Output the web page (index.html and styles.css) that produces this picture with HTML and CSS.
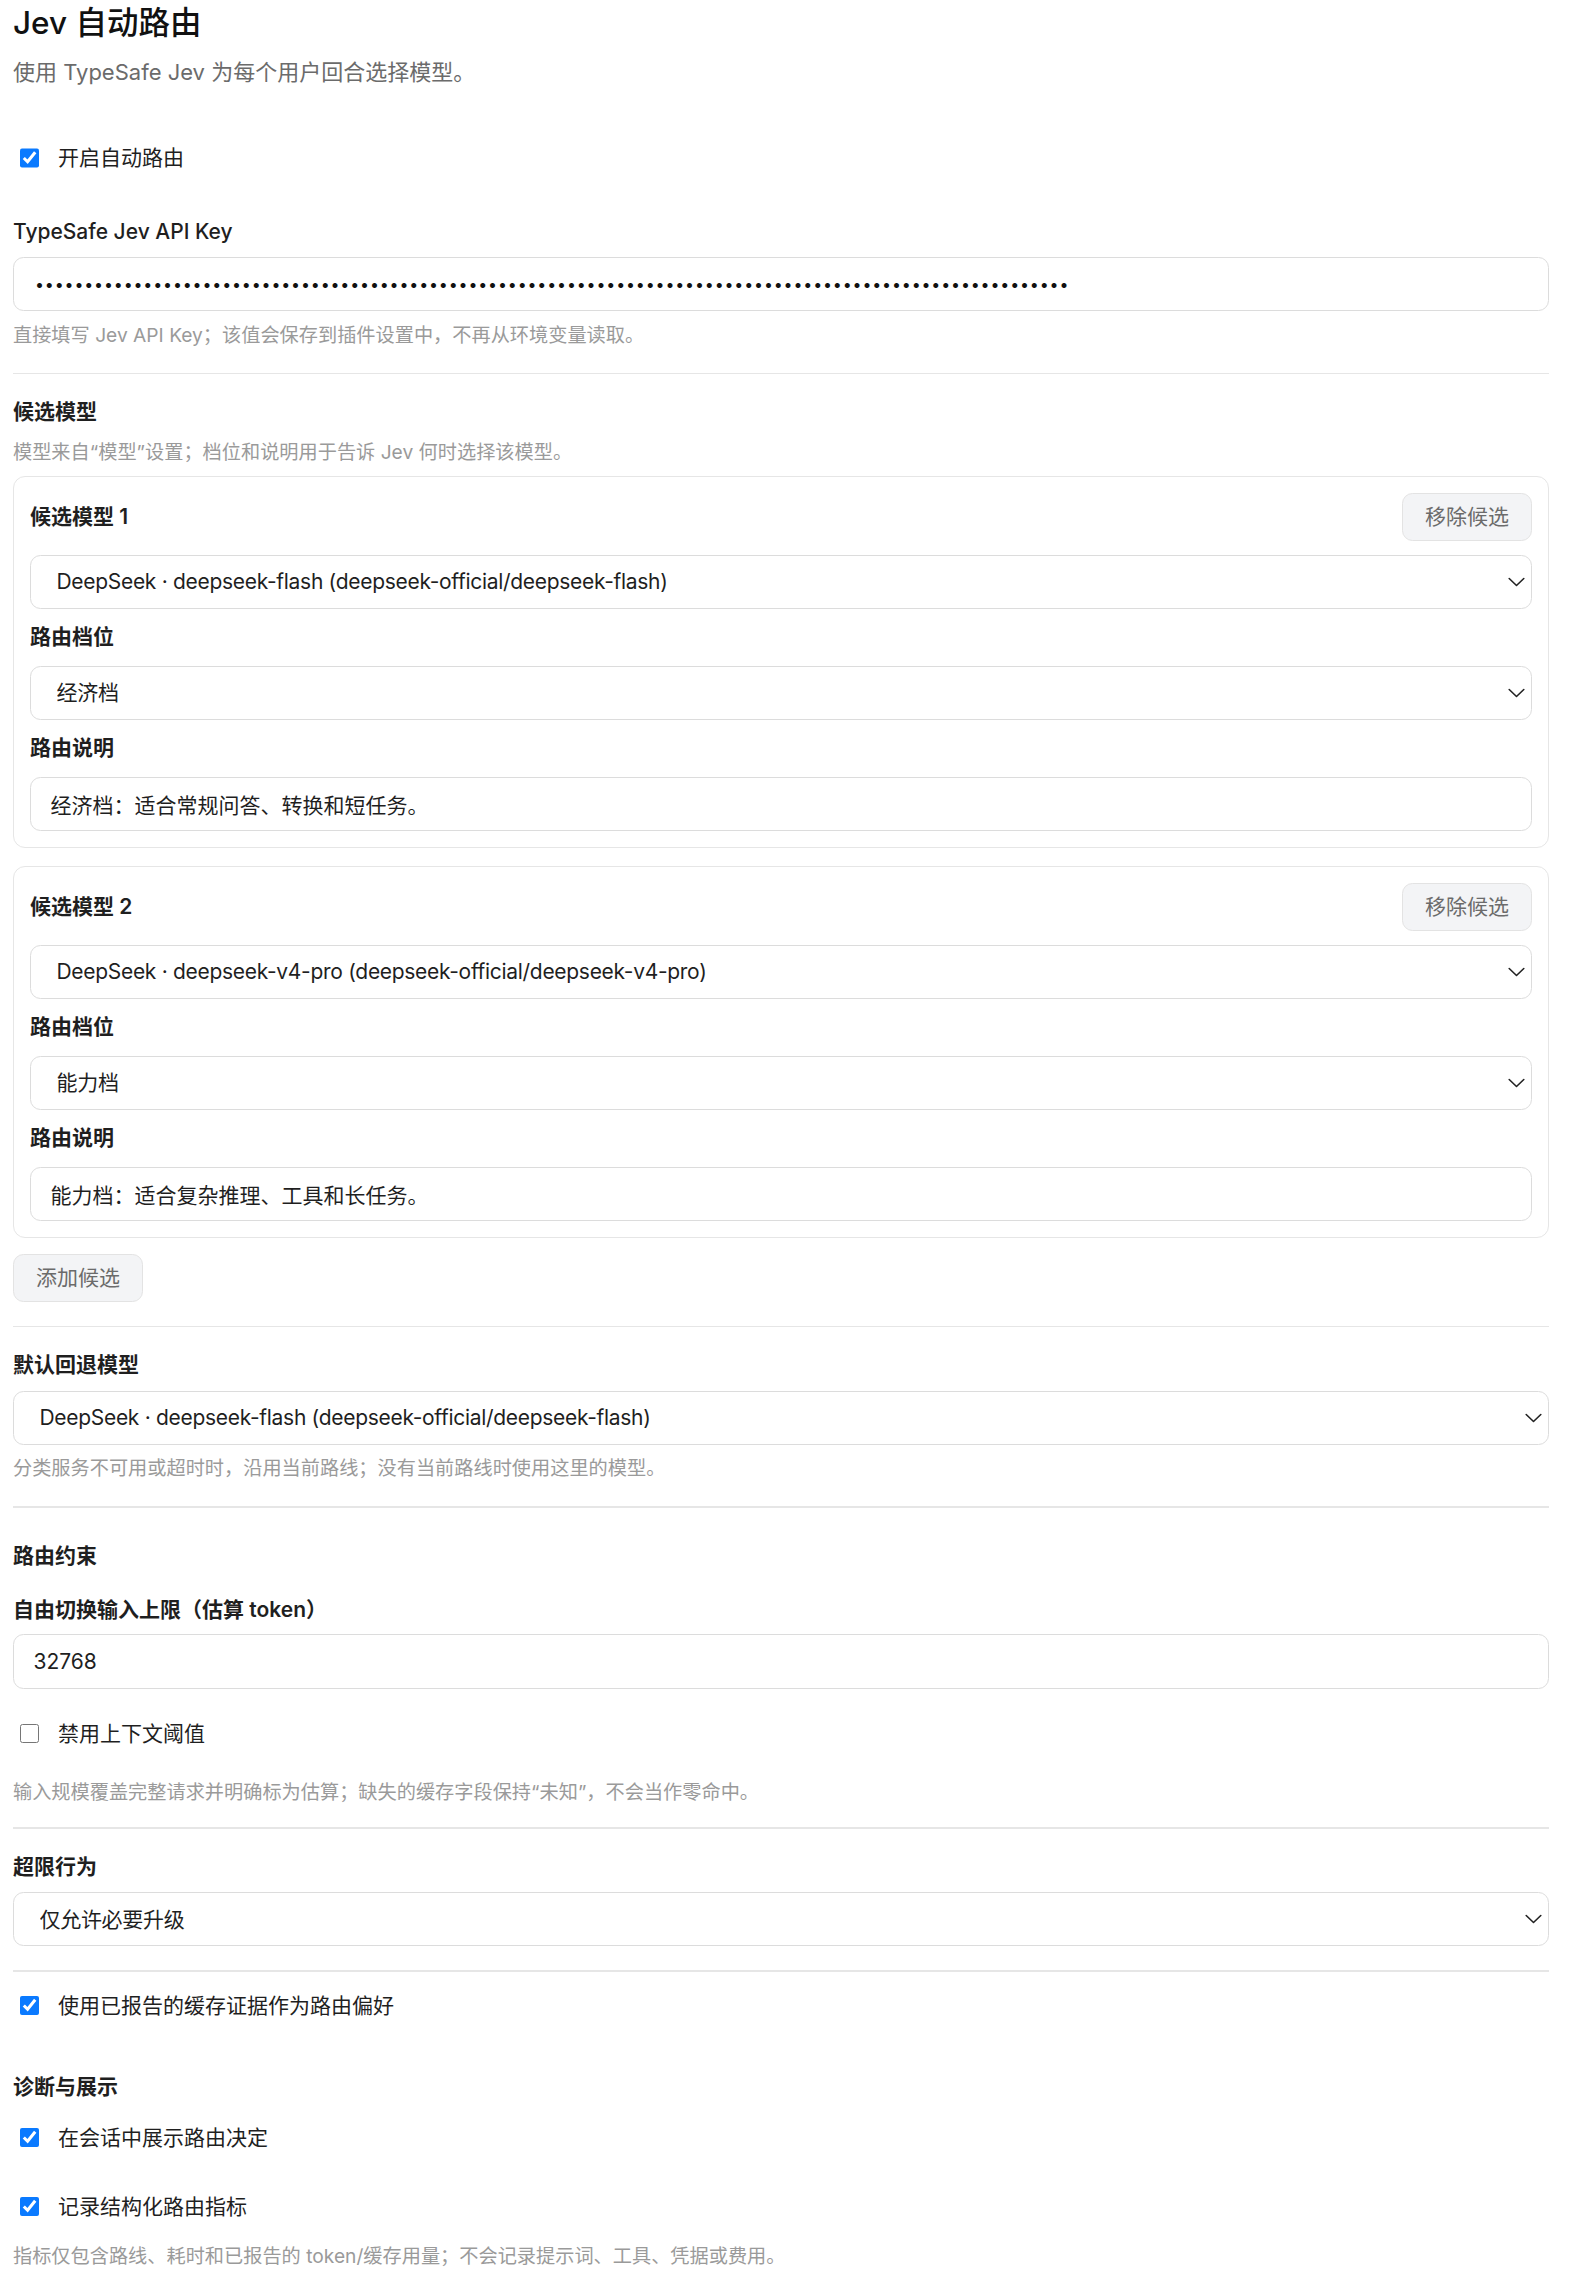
FILE: index.html
```html
<!DOCTYPE html>
<html lang="zh-CN">
<head>
<meta charset="utf-8">
<title>Jev 自动路由</title>
<link rel="stylesheet" href="styles.css">
</head>
<body>
<main class="page">
  <h1 class="title">Jev 自动路由</h1>
  <p class="subtitle">使用 TypeSafe Jev 为每个用户回合选择模型。</p>

  <label class="check-row first-check"><input type="checkbox" checked><span>开启自动路由</span></label>

  <label class="field-label api-label" for="apikey">TypeSafe Jev API Key</label>
  <input id="apikey" class="text-input api-input" type="password" value="sk-jev-00000000000000000000000000000000000000000000000000000000000000000000000000000000000000000000000000">
  <p class="help help-after-input">直接填写 Jev API Key；该值会保存到插件设置中，不再从环境变量读取。</p>

  <hr class="divider">

  <h3 class="section-title">候选模型</h3>
  <p class="help desc">模型来自“模型”设置；档位和说明用于告诉 Jev 何时选择该模型。</p>

  <section class="card first-card">
    <div class="card-head">
      <span class="card-title">候选模型 1</span>
      <button class="btn" type="button">移除候选</button>
    </div>
    <div class="select-wrap">
      <select class="select"><option>DeepSeek · deepseek-flash (deepseek-official/deepseek-flash)</option></select>
      <svg class="chevron" width="17" height="10" viewBox="0 0 17 10"><path d="M1.2 1.5 8.5 8.5 15.8 1.5" fill="none" stroke="#222" stroke-width="1.6" stroke-linecap="round" stroke-linejoin="round"/></svg>
    </div>
    <label class="card-label">路由档位</label>
    <div class="select-wrap">
      <select class="select"><option>经济档</option></select>
      <svg class="chevron" width="17" height="10" viewBox="0 0 17 10"><path d="M1.2 1.5 8.5 8.5 15.8 1.5" fill="none" stroke="#222" stroke-width="1.6" stroke-linecap="round" stroke-linejoin="round"/></svg>
    </div>
    <label class="card-label">路由说明</label>
    <input class="text-input" type="text" value="经济档：适合常规问答、转换和短任务。">
  </section>

  <section class="card">
    <div class="card-head">
      <span class="card-title">候选模型 2</span>
      <button class="btn" type="button">移除候选</button>
    </div>
    <div class="select-wrap">
      <select class="select"><option>DeepSeek · deepseek-v4-pro (deepseek-official/deepseek-v4-pro)</option></select>
      <svg class="chevron" width="17" height="10" viewBox="0 0 17 10"><path d="M1.2 1.5 8.5 8.5 15.8 1.5" fill="none" stroke="#222" stroke-width="1.6" stroke-linecap="round" stroke-linejoin="round"/></svg>
    </div>
    <label class="card-label">路由档位</label>
    <div class="select-wrap">
      <select class="select"><option>能力档</option></select>
      <svg class="chevron" width="17" height="10" viewBox="0 0 17 10"><path d="M1.2 1.5 8.5 8.5 15.8 1.5" fill="none" stroke="#222" stroke-width="1.6" stroke-linecap="round" stroke-linejoin="round"/></svg>
    </div>
    <label class="card-label">路由说明</label>
    <input class="text-input" type="text" value="能力档：适合复杂推理、工具和长任务。">
  </section>

  <button class="btn add-btn" type="button">添加候选</button>

  <hr class="divider">

  <label class="field-label sec-label">默认回退模型</label>
  <div class="select-wrap main-select">
    <select class="select"><option>DeepSeek · deepseek-flash (deepseek-official/deepseek-flash)</option></select>
    <svg class="chevron" width="17" height="10" viewBox="0 0 17 10"><path d="M1.2 1.5 8.5 8.5 15.8 1.5" fill="none" stroke="#222" stroke-width="1.6" stroke-linecap="round" stroke-linejoin="round"/></svg>
  </div>
  <p class="help help-after-input">分类服务不可用或超时时，沿用当前路线；没有当前路线时使用这里的模型。</p>

  <hr class="divider">

  <h3 class="section-title constraint-title">路由约束</h3>
  <label class="field-label limit-label">自由切换输入上限（估算 token）</label>
  <input class="text-input limit-input" type="text" value="32768">

  <label class="check-row disable-check"><input type="checkbox"><span>禁用上下文阈值</span></label>
  <p class="help help-after-check">输入规模覆盖完整请求并明确标为估算；缺失的缓存字段保持“未知”，不会当作零命中。</p>

  <hr class="divider divider-tight">

  <label class="field-label sec-label">超限行为</label>
  <div class="select-wrap main-select">
    <select class="select"><option>仅允许必要升级</option></select>
    <svg class="chevron" width="17" height="10" viewBox="0 0 17 10"><path d="M1.2 1.5 8.5 8.5 15.8 1.5" fill="none" stroke="#222" stroke-width="1.6" stroke-linecap="round" stroke-linejoin="round"/></svg>
  </div>

  <hr class="divider">

  <label class="check-row cache-check"><input type="checkbox" checked><span>使用已报告的缓存证据作为路由偏好</span></label>

  <h3 class="section-title diag-title">诊断与展示</h3>
  <label class="check-row show-check"><input type="checkbox" checked><span>在会话中展示路由决定</span></label>
  <label class="check-row metric-check"><input type="checkbox" checked><span>记录结构化路由指标</span></label>
  <p class="help help-last">指标仅包含路线、耗时和已报告的 token/缓存用量；不会记录提示词、工具、凭据或费用。</p>
</main>
</body>
</html>
```

FILE: styles.css
```css
* { box-sizing: border-box; }

html, body {
  margin: 0;
  padding: 0;
  background: #ffffff;
}

body {
  font-family: Inter, "Noto Sans CJK SC", "Noto Sans", sans-serif;
  color: #1f1f1f;
  font-size: 21px;
  line-height: 30px;
}

.page {
  width: 1536px;
  margin-left: 13px;
  display: flex;
  flex-direction: column;
  align-items: stretch;
}

.title {
  margin: 0;
  font-size: 31.5px;
  line-height: 45px;
  font-weight: 500;
  color: #111111;
}

.subtitle {
  margin: 12px 0 0;
  font-size: 22px;
  line-height: 31.5px;
  color: #6b6b6b;
}

.check-row {
  display: flex;
  align-items: center;
  height: 30px;
  font-size: 21px;
  color: #1f1f1f;
}

.check-row input {
  width: 19.5px;
  height: 19.5px;
  margin: 0 0 0 6.5px;
  accent-color: #0a7aff;
  flex: none;
}

.check-row span {
  margin-left: 19px;
}

.first-check { margin-top: 54.5px; }
.disable-check { margin-top: 30px; }
.cache-check { margin-top: 19px; }
.show-check { margin-top: 21px; }
.metric-check { margin-top: 39px; }

.field-label {
  display: block;
  font-size: 21px;
  line-height: 30px;
  font-weight: 600;
  color: #1f1f1f;
}

.api-label {
  margin-top: 44px;
  font-weight: 500;
}

.sec-label { margin-top: 23px; }
.limit-label { margin-top: 24px; }

.text-input {
  display: block;
  width: 100%;
  height: 54px;
  border: 1.5px solid #dcdcdc;
  border-radius: 10.5px;
  padding: 0 19.5px;
  font-family: inherit;
  font-size: 21px;
  color: #1f1f1f;
  background: #ffffff;
  outline: none;
}

.api-input {
  margin-top: 10px;
  font-size: 16px;
  letter-spacing: 0.85px;
  padding-left: 21px;
  color: #111111;
}

.limit-input {
  margin-top: 9px;
  height: 55px;
}

.help {
  margin: 0;
  font-size: 19.2px;
  line-height: 27px;
  color: #9a9a9a;
}

.help-after-input { margin-top: 10.5px; }
.help-after-check { margin-top: 30.5px; }
.help-last { margin-top: 21.5px; }
.desc { margin-top: 11.5px; }

.divider {
  margin: 24px 0 0;
  border: 0;
  height: 1.5px;
  background: #e6e6e6;
}

.divider-tight { margin-top: 21px; }

.section-title {
  margin: 23px 0 0;
  font-size: 21px;
  line-height: 30px;
  font-weight: 600;
  color: #1f1f1f;
}

.constraint-title { margin-top: 33px; }
.diag-title { margin-top: 51px; }

.card {
  margin-top: 18.5px;
  border: 1.5px solid #e6e6e6;
  border-radius: 12px;
  padding: 16px;
  display: flex;
  flex-direction: column;
  gap: 13.5px;
}

.first-card { margin-top: 10.5px; }

.card-head {
  display: flex;
  align-items: center;
  justify-content: space-between;
  height: 48px;
}

.card-title {
  font-size: 21px;
  font-weight: 600;
  color: #1f1f1f;
}

.card-label {
  display: block;
  font-size: 21px;
  line-height: 30px;
  font-weight: 600;
  color: #1f1f1f;
}

.btn {
  height: 48px;
  padding: 0 22px;
  border: 1.5px solid #e3e3e3;
  border-radius: 10.5px;
  background: #f3f4f6;
  color: #6b6b6b;
  font-family: inherit;
  font-size: 21px;
  line-height: 30px;
}

.add-btn {
  align-self: flex-start;
  margin-top: 16px;
  width: 130px;
}

.select-wrap {
  position: relative;
}

.main-select {
  margin-top: 10.5px;
}

.select {
  display: block;
  width: 100%;
  height: 54px;
  appearance: none;
  -webkit-appearance: none;
  border: 1.5px solid #dcdcdc;
  border-radius: 10.5px;
  padding: 0 48px 0 25.5px;
  font-family: inherit;
  font-size: 21px;
  letter-spacing: -0.3px;
  color: #1f1f1f;
  background: #ffffff;
  outline: none;
}

.chevron {
  position: absolute;
  right: 7.5px;
  top: 50%;
  margin-top: -5px;
  pointer-events: none;
}
```
